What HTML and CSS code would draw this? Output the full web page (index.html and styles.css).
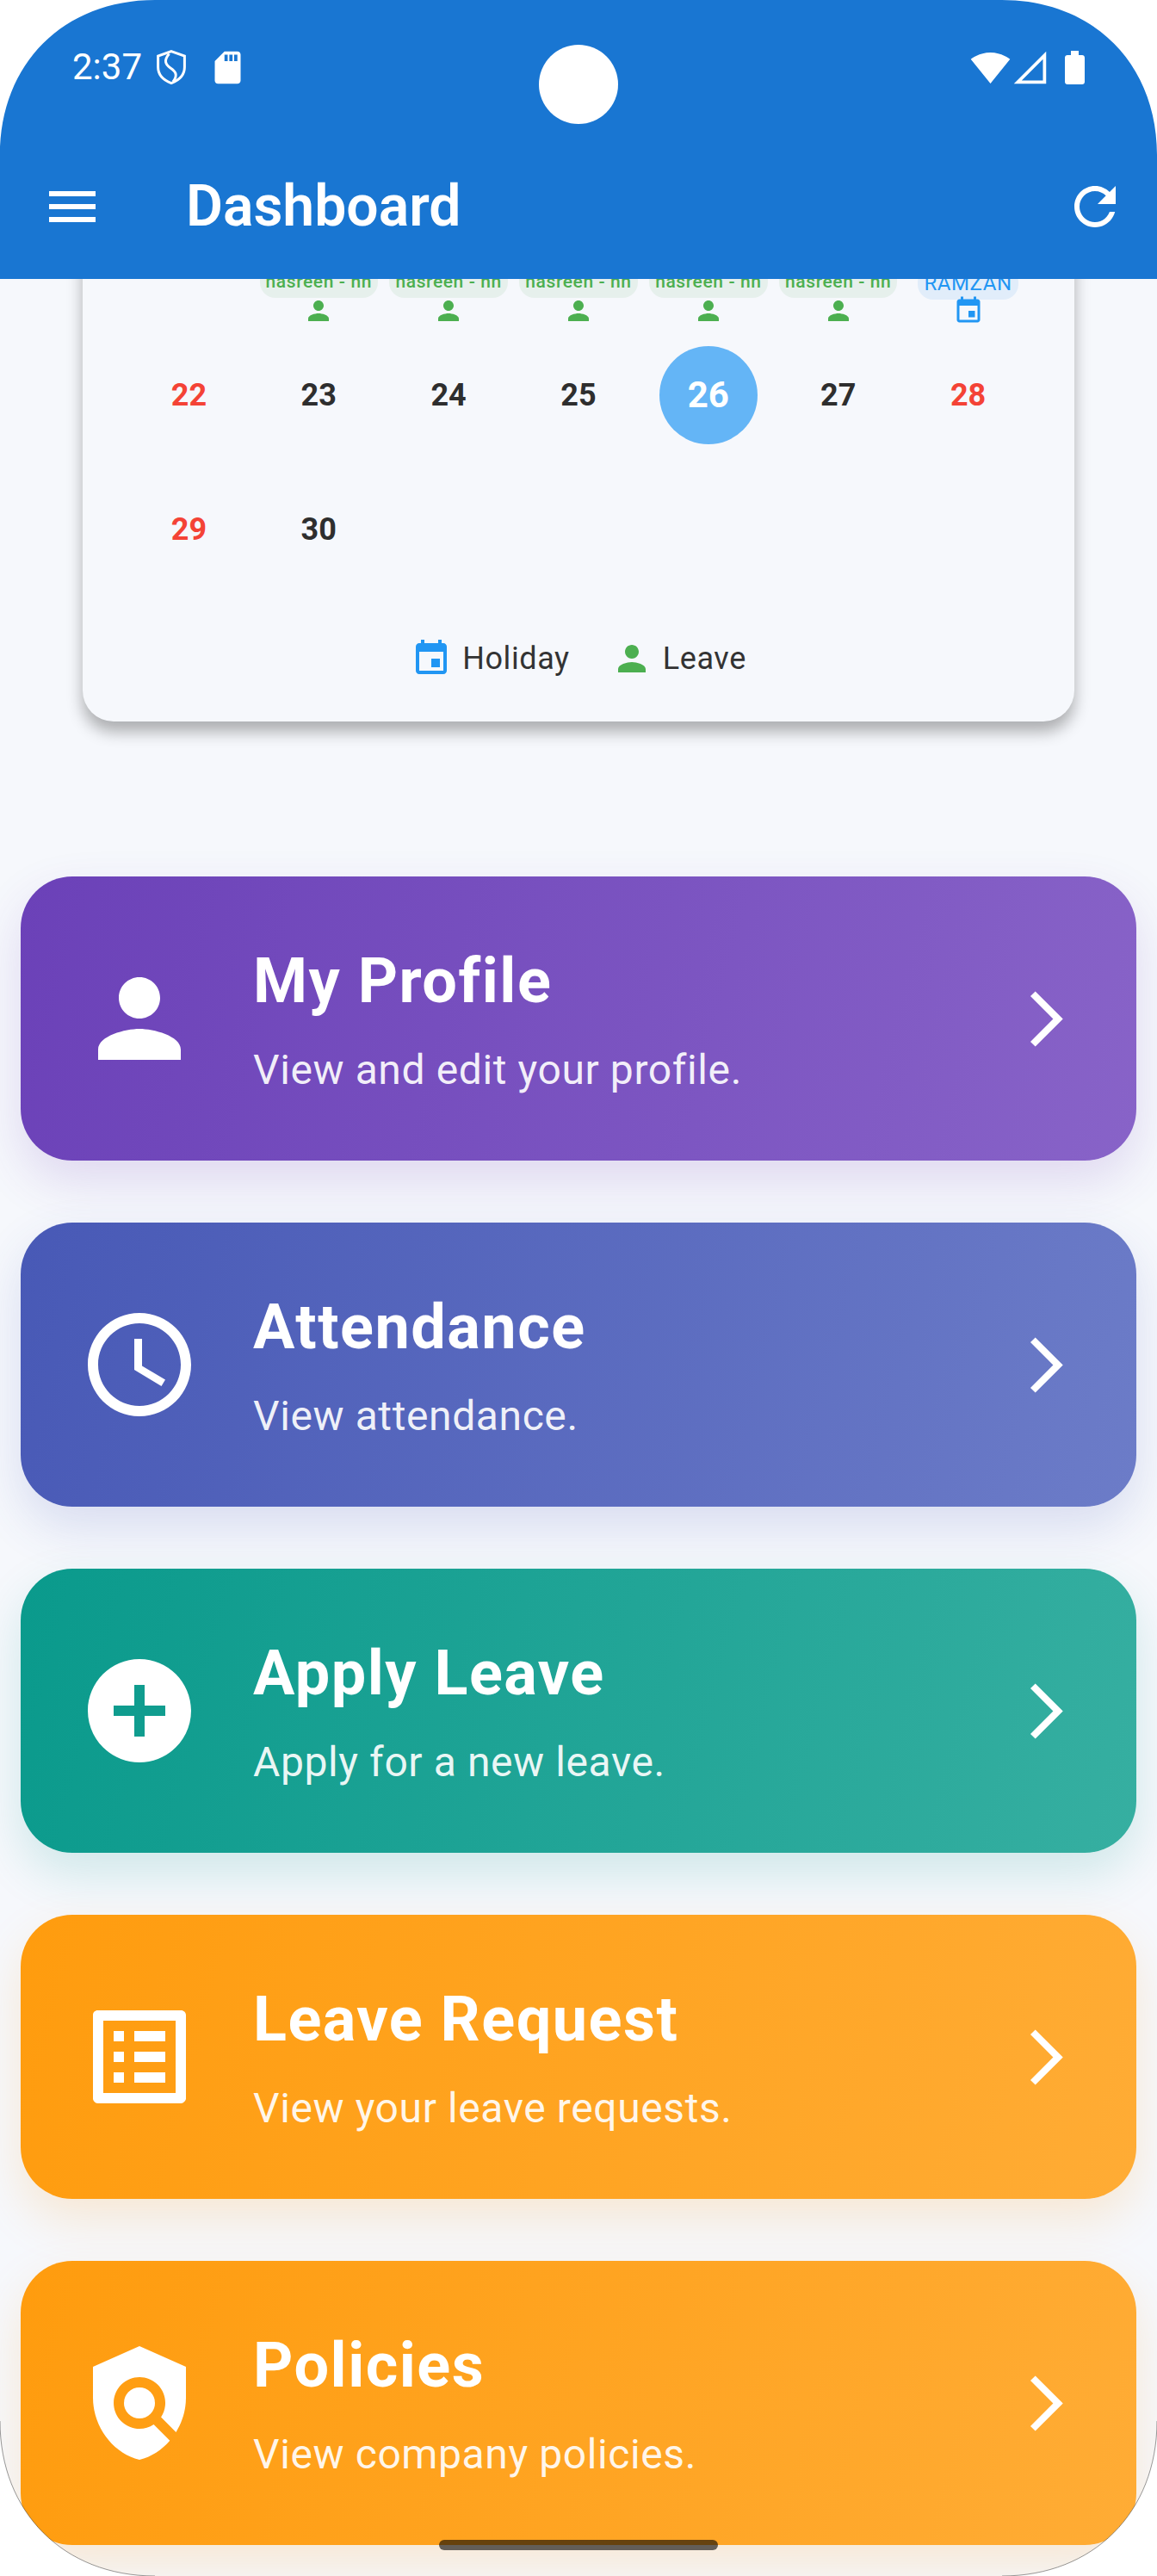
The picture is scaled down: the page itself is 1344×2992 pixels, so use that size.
FILE: index.html
```html
<!DOCTYPE html>
<html lang="en">
<head>
<meta charset="utf-8">
<title>Dashboard</title>
<link rel="stylesheet" href="styles.css">
</head>
<body>
<svg class="defs" width="0" height="0" aria-hidden="true">
  <symbol id="i-person" viewBox="0 0 24 24"><path d="M12 12c2.21 0 4-1.79 4-4s-1.79-4-4-4-4 1.79-4 4 1.79 4 4 4zm0 2c-2.67 0-8 1.34-8 4v2h16v-2c0-2.66-5.33-4-8-4z"/></symbol>
  <symbol id="i-event" viewBox="0 0 24 24"><path d="M17 12h-5v5h5v-5zM16 1v2H8V1H6v2H5c-1.11 0-1.99.9-1.99 2L3 19c0 1.1.89 2 2 2h14c1.1 0 2-.9 2-2V5c0-1.1-.9-2-2-2h-1V1h-2zm3 18H5V8h14v11z"/></symbol>
  <symbol id="i-chevron" viewBox="0 0 24 24"><path d="M6.23 20.23 8 22l10-10L8 2 6.23 3.77 14.46 12z"/></symbol>
</svg>
<div class="app">
  <header class="header">
    <div class="statusbar">
      <span class="clock">2:37</span>
      <svg class="st-shield" viewBox="0 0 34 40"><path d="M17 1.6 32.4 7v13c0 8.6-6 15-15.4 18.6C7.600 35 1.600 28.600 1.600 20V7z"/><path d="M14.500 4.500C8 12 10 17 16 21c6 4 9 8 3 16"/></svg>
      <svg class="st-sd" viewBox="0 0 24 24"><path d="M18 2h-8L4.020 8 4 20c0 1.100.9 2 2 2h12c1.100 0 2-.9 2-2V4c0-1.100-.9-2-2-2zm-6 6h-2V4h2v4zm3 0h-2V4h2v4zm3 0h-2V4h2v4z"/></svg>
      <svg class="st-wifi" viewBox="0 0 24 24"><path d="M12.010 21.490 23.640 7c-.45-.34-4.930-4-11.640-4C5.280 3 .81 6.660.36 7l11.640 14.500.01-.01z"/></svg>
      <svg class="st-signal" viewBox="0 0 24 24"><path d="M2 22h20V2L2 22zm18-2H6.830L20 6.830V20z"/></svg>
      <svg class="st-battery" viewBox="0 0 23 39"><path d="M7 5V0h9v5h4c1.700 0 3 1.300 3 3v28c0 1.700-1.300 3-3 3H3c-1.700 0-3-1.300-3-3V8c0-1.700 1.300-3 3-3z"/></svg>
    </div>
    <div class="toolbar">
      <svg class="tool-icon" viewBox="0 0 24 24"><path d="M3 18h18v-2H3v2zm0-5h18v-2H3v2zm0-7v2h18V6H3z"/></svg>
      <h1 class="title">Dashboard</h1>
      <svg class="tool-icon" viewBox="0 0 24 24"><path d="M17.650 6.350C16.200 4.900 14.210 4 12 4c-4.420 0-7.990 3.580-7.990 8s3.570 8 7.990 8c3.730 0 6.840-2.550 7.730-6h-2.080c-.82 2.330-3.040 4-5.650 4-3.310 0-6-2.690-6-6s2.690-6 6-6c1.660 0 3.140.69 4.220 1.780L13 11h7V4l-2.350 2.350z"/></svg>
    </div>
  </header>
  <div class="camera"></div>

  <main class="scroll">
    <section class="calendar">
      <div class="month">
        <div class="cell"></div>
        <div class="cell event"><span class="chip chip-leave">nasreen - hn</span><svg class="ev-icon green"><use href="#i-person"/></svg></div>
        <div class="cell event"><span class="chip chip-leave">nasreen - hn</span><svg class="ev-icon green"><use href="#i-person"/></svg></div>
        <div class="cell event"><span class="chip chip-leave">nasreen - hn</span><svg class="ev-icon green"><use href="#i-person"/></svg></div>
        <div class="cell event"><span class="chip chip-leave">nasreen - hn</span><svg class="ev-icon green"><use href="#i-person"/></svg></div>
        <div class="cell event"><span class="chip chip-leave">nasreen - hn</span><svg class="ev-icon green"><use href="#i-person"/></svg></div>
        <div class="cell event"><span class="chip chip-holiday">RAMZAN</span><svg class="ev-icon blue"><use href="#i-event"/></svg></div>

        <div class="cell day red">22</div>
        <div class="cell day">23</div>
        <div class="cell day">24</div>
        <div class="cell day">25</div>
        <div class="cell day"><span class="today">26</span></div>
        <div class="cell day">27</div>
        <div class="cell day red">28</div>

        <div class="cell day red">29</div>
        <div class="cell day">30</div>
      </div>
      <div class="legend">
        <svg class="lg-icon blue"><use href="#i-event"/></svg>
        <span class="lg-text">Holiday</span>
        <svg class="lg-icon green lg-second"><use href="#i-person"/></svg>
        <span class="lg-text">Leave</span>
      </div>
    </section>

    <nav class="tiles">
      <a class="tile purple">
        <svg class="tile-icon"><use href="#i-person"/></svg>
        <div class="tile-body"><div class="tile-title">My Profile</div><div class="tile-sub">View and edit your profile.</div></div>
        <svg class="tile-go"><use href="#i-chevron"/></svg>
      </a>
      <a class="tile indigo">
        <svg class="tile-icon" viewBox="0 0 24 24"><path d="M11.990 2C6.470 2 2 6.480 2 12s4.470 10 9.990 10C17.520 22 22 17.520 22 12S17.520 2 11.990 2zM12 20c-4.420 0-8-3.580-8-8s3.580-8 8-8 8 3.580 8 8-3.580 8-8 8zm.5-13H11v6l5.250 3.150.75-1.230-4.500-2.670z"/></svg>
        <div class="tile-body"><div class="tile-title">Attendance</div><div class="tile-sub">View attendance.</div></div>
        <svg class="tile-go"><use href="#i-chevron"/></svg>
      </a>
      <a class="tile teal">
        <svg class="tile-icon" viewBox="0 0 24 24"><path d="M12 2C6.480 2 2 6.480 2 12s4.480 10 10 10 10-4.480 10-10S17.520 2 12 2zm5 11h-4v4h-2v-4H7v-2h4V7h2v4h4v2z"/></svg>
        <div class="tile-body"><div class="tile-title">Apply Leave</div><div class="tile-sub">Apply for a new leave.</div></div>
        <svg class="tile-go"><use href="#i-chevron"/></svg>
      </a>
      <a class="tile orange">
        <svg class="tile-icon" viewBox="0 0 24 24"><path d="M19 5v14H5V5h14m1.100-2H3.900c-.5 0-.9.4-.9.9v16.200c0 .4.4.9.9.9h16.200c.4 0 .9-.5.9-.9V3.900c0-.5-.5-.9-.9-.9zM11 7h6v2h-6V7zm0 4h6v2h-6v-2zm0 4h6v2h-6zM7 7h2v2H7zm0 4h2v2H7zm0 4h2v2H7z"/></svg>
        <div class="tile-body"><div class="tile-title">Leave Request</div><div class="tile-sub">View your leave requests.</div></div>
        <svg class="tile-go"><use href="#i-chevron"/></svg>
      </a>
      <a class="tile orange">
        <svg class="tile-icon" viewBox="0 0 24 24"><path d="M21 5l-9-4-9 4v6c0 5.550 3.840 10.740 9 12 2.300-.56 4.330-1.900 5.880-3.710l-3.120-3.120c-1.940 1.290-4.580 1.070-6.290-.64-1.950-1.950-1.950-5.120 0-7.070 1.950-1.950 5.120-1.950 7.070 0 1.710 1.710 1.920 4.350.64 6.290l2.900 2.900C20.290 15.690 21 13.380 21 11V5z"/><circle cx="12" cy="12" r="3"/></svg>
        <div class="tile-body"><div class="tile-title">Policies</div><div class="tile-sub">View company policies.</div></div>
        <svg class="tile-go"><use href="#i-chevron"/></svg>
      </a>
    </nav>
  </main>

  <div class="home-bar"></div>
  <svg class="corners" viewBox="0 0 1344 2992" aria-hidden="true">
    <path class="corner" d="M0 0H180C74 0 0 74 0 180Z"/>
    <path class="corner" d="M1344 0H1164C1270 0 1344 74 1344 180Z"/>
    <path class="corner" d="M0 2992H180C74 2992 0 2918 0 2812Z"/>
    <path class="corner" d="M1344 2992H1164C1270 2992 1344 2918 1344 2812Z"/>
    <path class="corner-edge" d="M0 2812C0 2918 74 2992 180 2992"/>
    <path class="corner-edge" d="M1344 2812C1344 2918 1270 2992 1164 2992"/>
  </svg>
</div>
</body>
</html>
```

FILE: styles.css
```css
* { box-sizing: border-box; }

html, body { margin: 0; padding: 0; background: #fff; }

body { font-family: Roboto, "Liberation Sans", sans-serif; }

.defs { position: absolute; }

.app {
  position: relative;
  width: 1344px;
  height: 2992px;
  overflow: hidden;
  background: #f6f8fc;
  display: flex;
  flex-direction: column;
}

/* Header */
.header {
  position: relative;
  z-index: 2;
  flex: none;
  height: 324px;
  background: #1976d2;
  color: #fff;
  fill: #fff;
}

.statusbar {
  height: 156px;
  padding: 0 84px;
  display: flex;
  align-items: center;
}

.clock { font-size: 42px; line-height: 48px; width: 92px; }

.st-shield { width: 34px; height: 40px; margin-left: 6px; fill: none; stroke: #fff; stroke-width: 3; }
.st-sd { width: 45px; height: 45px; margin-left: 26px; }
.st-wifi { width: 47px; height: 47px; margin-left: auto; }
.st-signal { width: 45px; height: 45px; }
.st-battery { width: 23px; height: 39px; margin-left: 18px; }

.toolbar {
  height: 168px;
  padding: 0 36px 0 48px;
  display: flex;
  align-items: center;
}

.tool-icon { width: 72px; height: 72px; flex: none; }

.title {
  flex: 1;
  margin: 0 0 0 96px;
  font-size: 66px;
  line-height: 78px;
  font-weight: 600;
}

.camera {
  position: absolute;
  z-index: 3;
  left: 626px;
  top: 52px;
  width: 92px;
  height: 92px;
  border-radius: 50%;
  background: #fff;
}

/* Scrolled content */
.scroll { flex: 1; min-height: 0; overflow: hidden; }

.calendar {
  margin: -100px 96px 0;
  padding: 0 48px 49px;
  background: #f6f8fc;
  border-radius: 0 0 36px 36px;
  box-shadow: 0 12px 18px rgba(0, 0, 0, .3);
}

.month {
  display: grid;
  grid-template-columns: repeat(7, 1fr);
  grid-auto-rows: 156px;
}

.cell { display: flex; align-items: center; justify-content: center; }

.event { flex-direction: column; justify-content: flex-end; padding-bottom: 1px; }

.chip { border-radius: 18px; white-space: nowrap; }

.chip-leave {
  margin-bottom: -3px;
  padding: 0 7px;
  font-size: 21px;
  line-height: 38px;
  font-weight: 500;
  letter-spacing: .6px;
  color: #4caf50;
  background: #e6f0ec;
}

.chip-holiday {
  margin-bottom: -5px;
  padding: 0 7px;
  font-size: 24px;
  line-height: 38px;
  letter-spacing: .6px;
  color: #2196f3;
  background: #e1edfa;
}

.ev-icon { width: 36px; height: 36px; flex: none; }

.green { fill: #4caf50; }
.blue { fill: #2196f3; }

.day { padding-top: 1px; font-size: 36px; font-weight: 700; color: #2e2e2e; }
.day.red { color: #f44336; }

.today {
  width: 114px;
  height: 114px;
  border-radius: 50%;
  background: #64b5f6;
  color: #fff;
  font-size: 42px;
  display: flex;
  align-items: center;
  justify-content: center;
}

.legend {
  margin-top: 49px;
  display: flex;
  align-items: center;
  justify-content: center;
}

.lg-icon { width: 48px; height: 48px; flex: none; }
.lg-second { margin-left: 48px; }
.lg-text { margin-left: 12px; font-size: 36px; line-height: 48px; letter-spacing: .6px; color: #333; }

/* Action tiles */
.tiles {
  margin: 180px 24px 0;
  display: flex;
  flex-direction: column;
  gap: 72px;
}

.tile {
  flex: none;
  height: 330px;
  padding: 0 66px;
  border-radius: 60px;
  display: flex;
  align-items: center;
  color: #fff;
  fill: #fff;
}

.purple { background: linear-gradient(104.3deg, #6b41b8, #8863c8); box-shadow: 0 24px 56px rgba(103, 58, 183, .16); }
.indigo { background: linear-gradient(104.3deg, #4859b6, #6c7cc8); box-shadow: 0 24px 56px rgba(63, 81, 181, .16); }
.teal { background: linear-gradient(104.3deg, #0a9a8c, #36afa1); box-shadow: 0 24px 56px rgba(0, 150, 136, .16); }
.orange { background: linear-gradient(104.3deg, #ff9c0e, #ffac35); box-shadow: 0 24px 56px rgba(255, 152, 0, .16); }

.tile-icon { width: 144px; height: 144px; flex: none; }
.tile-body { flex: 1; margin-left: 60px; padding-top: 2px; }
.tile-title { font-size: 72px; line-height: 84px; font-weight: 700; letter-spacing: 1.5px; }
.tile-sub { margin-top: 33px; font-size: 48px; line-height: 56px; letter-spacing: .6px; color: rgba(255, 255, 255, .92); }
.tile-go { width: 77px; height: 77px; flex: none; }

/* Overlays */
.home-bar {
  position: absolute;
  z-index: 4;
  left: 510px;
  top: 2950px;
  width: 324px;
  height: 12px;
  border-radius: 6px;
  background: rgba(0, 0, 0, .6);
}

.corners {
  position: absolute;
  z-index: 5;
  left: 0;
  top: 0;
  width: 1344px;
  height: 2992px;
  pointer-events: none;
}

.corner { fill: #fff; }
.corner-edge { fill: none; stroke: #333; stroke-width: 1; stroke-opacity: .5; }
```
